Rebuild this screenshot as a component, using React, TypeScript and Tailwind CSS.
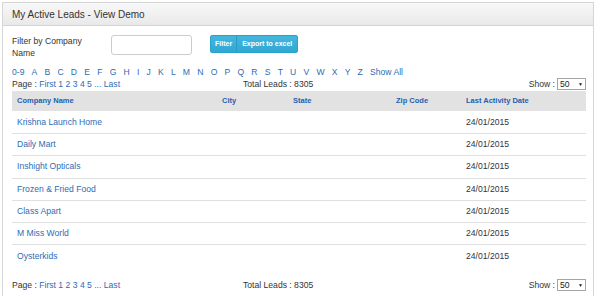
const letters = ['0-9', 'A', 'B', 'C', 'D', 'E', 'F', 'G', 'H', 'I', 'J', 'K', 'L', 'M', 'N', 'O', 'P', 'Q', 'R', 'S', 'T', 'U', 'V', 'W', 'X', 'Y', 'Z', 'Show All']

const leads = [
  'Krishna Launch Home',
  'Daily Mart',
  'Inshight Opticals',
  'Frozen & Fried Food',
  'Class Apart',
  'M Miss World',
  'Oysterkids',
]

const cols = 'grid grid-cols-[205px_71px_103px_70px_1fr]'

function Pager() {
  return (
    <div className="flex items-center h-[13px] leading-[12px]">
      <div className="w-[231px] text-[#333]">
        Page :{' '}
        <a className="text-[#2d6cb5]">First</a>{' '}
        <a className="text-[#2d6cb5]">1</a> <a className="text-[#2d6cb5]">2</a>{' '}
        <a className="text-[#2d6cb5]">3</a> <a className="text-[#2d6cb5]">4</a>{' '}
        <a className="text-[#2d6cb5]">5</a> <span className="text-[#2d6cb5]">...</span>{' '}
        <a className="text-[#2d6cb5]">Last</a>
      </div>
      <div className="text-[#333]">Total Leads : 8305</div>
      <div className="ml-auto flex items-center gap-[2px] text-[#333]">
        <span>Show :</span>
        <div className="flex items-center justify-between w-[29px] h-[12px] border border-[#a5a5a5] bg-white pl-[2px] pr-[2px]">
          <span className="text-[#222]">50</span>
          <span className="text-[5px] leading-none text-[#222]">▼</span>
        </div>
      </div>
    </div>
  )
}

export default function App() {
  return (
    <div className="w-[596px] h-[296px] overflow-hidden bg-white font-['Liberation_Sans',Arial,sans-serif] text-[8.6px]">
      <div className="mx-[2px] mt-[2px] border border-[#d6d6d6] h-[300px]">
        {/* Panel title */}
        <div className="h-[23px] flex items-center pl-[9px] border-b border-[#d3d3d3] bg-gradient-to-b from-[#f8f8f8] to-[#e9e9e9]">
          <span className="text-[10px] text-[#333]">My Active Leads - View Demo</span>
        </div>

        <div className="pl-[9px] pr-[7px] pt-[9px]">
          {/* Filter row */}
          <div className="flex items-start">
            <label className="w-[99px] pr-[12px] mt-[1px] leading-[11.6px] text-[#333]">
              Filter by Company Name
            </label>
            <input className="w-[81px] h-[20px] rounded-[3px] border border-[#ccc] bg-white" />
            <div className="ml-[18px] flex h-[18px] rounded-[2px] border border-[#2aa1cb] bg-gradient-to-b from-[#41b7df] to-[#30a8d3] text-white font-bold text-[7px]">
              <button className="px-[4px] border-r border-[#2a9bc4]">Filter</button>
              <button className="px-[5px]">Export to excel</button>
            </div>
          </div>

          {/* Alphabet */}
          <div className="mt-[6.5px] flex gap-[7.2px] leading-[12px] text-[#2d6cb5]">
            {letters.map((l) => (
              <a key={l}>{l}</a>
            ))}
          </div>

          <Pager />

          {/* Table */}
          <div>
            <div className={`${cols} h-[20px] items-center bg-[#e2e2e2] text-[7.5px] font-bold text-[#2260b0]`}>
              <div className="pl-[5px]">Company Name</div>
              <div className="pl-[5px]">City</div>
              <div className="pl-[5px]">State</div>
              <div className="pl-[5px]">Zip Code</div>
              <div className="pl-[5px]">Last Activity Date</div>
            </div>
            {leads.map((name, i) => (
              <div
                key={name}
                className={`${cols} h-[22.3px] items-center border-t ${i === 0 ? 'border-transparent' : 'border-[#e0e0e0]'}`}
              >
                <div className="pl-[5px] text-[#2d6cb5]">{name}</div>
                <div />
                <div />
                <div />
                <div className="pl-[5px] text-[#333]">24/01/2015</div>
              </div>
            ))}
          </div>

          <div className="mt-[12px]">
            <Pager />
          </div>
        </div>
      </div>
    </div>
  )
}
